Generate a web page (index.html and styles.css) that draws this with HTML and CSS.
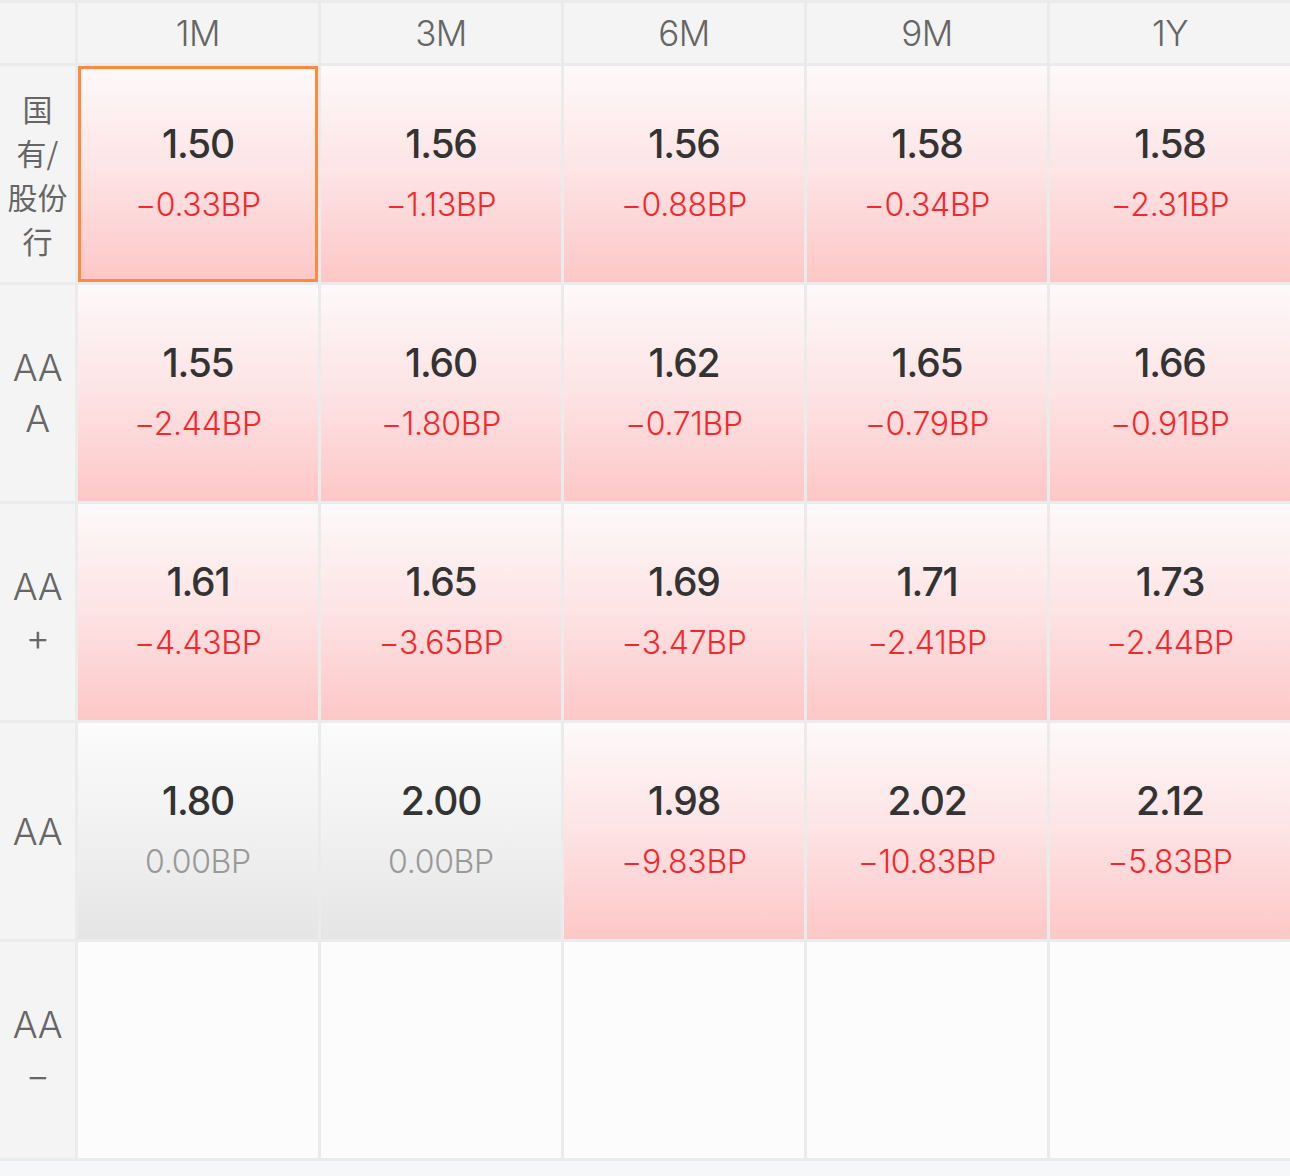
FILE: index.html
```html
<!DOCTYPE html>
<html lang="zh-CN">
<head>
<meta charset="utf-8">
<title>利率矩阵</title>
<link rel="stylesheet" href="styles.css">
</head>
<body>
<div class="matrix">
  <div class="corner"></div>
  <div class="head">1M</div>
  <div class="head">3M</div>
  <div class="head">6M</div>
  <div class="head">9M</div>
  <div class="head">1Y</div>

  <div class="label label-cn">国有/股份行</div>
  <div class="cell down selected"><span class="rate">1.50</span><span class="bp">−0.33BP</span></div>
  <div class="cell down"><span class="rate">1.56</span><span class="bp">−1.13BP</span></div>
  <div class="cell down"><span class="rate">1.56</span><span class="bp">−0.88BP</span></div>
  <div class="cell down"><span class="rate">1.58</span><span class="bp">−0.34BP</span></div>
  <div class="cell down"><span class="rate">1.58</span><span class="bp">−2.31BP</span></div>

  <div class="label label-en">AAA</div>
  <div class="cell down"><span class="rate">1.55</span><span class="bp">−2.44BP</span></div>
  <div class="cell down"><span class="rate">1.60</span><span class="bp">−1.80BP</span></div>
  <div class="cell down"><span class="rate">1.62</span><span class="bp">−0.71BP</span></div>
  <div class="cell down"><span class="rate">1.65</span><span class="bp">−0.79BP</span></div>
  <div class="cell down"><span class="rate">1.66</span><span class="bp">−0.91BP</span></div>

  <div class="label label-en">AA+</div>
  <div class="cell down"><span class="rate">1.61</span><span class="bp">−4.43BP</span></div>
  <div class="cell down"><span class="rate">1.65</span><span class="bp">−3.65BP</span></div>
  <div class="cell down"><span class="rate">1.69</span><span class="bp">−3.47BP</span></div>
  <div class="cell down"><span class="rate">1.71</span><span class="bp">−2.41BP</span></div>
  <div class="cell down"><span class="rate">1.73</span><span class="bp">−2.44BP</span></div>

  <div class="label label-en">AA</div>
  <div class="cell flat"><span class="rate">1.80</span><span class="bp">0.00BP</span></div>
  <div class="cell flat"><span class="rate">2.00</span><span class="bp">0.00BP</span></div>
  <div class="cell down"><span class="rate">1.98</span><span class="bp">−9.83BP</span></div>
  <div class="cell down"><span class="rate">2.02</span><span class="bp">−10.83BP</span></div>
  <div class="cell down"><span class="rate">2.12</span><span class="bp">−5.83BP</span></div>

  <div class="label label-en">AA−</div>
  <div class="cell empty"></div>
  <div class="cell empty"></div>
  <div class="cell empty"></div>
  <div class="cell empty"></div>
  <div class="cell empty"></div>
</div>
</body>
</html>
```

FILE: styles.css
```css
html, body {
  margin: 0;
  padding: 0;
}

body {
  background: #f6f7f9;
  font-family: Inter, "Noto Sans CJK SC", sans-serif;
}

.matrix {
  display: grid;
  grid-template-columns: 75px repeat(5, 240px);
  grid-template-rows: 60px repeat(5, 216px);
  gap: 3px;
  padding: 3px 0;
  background: #ebebeb;
}

.corner,
.head,
.label {
  background: #f4f4f4;
}

.head {
  display: flex;
  align-items: center;
  justify-content: center;
  font-size: 35px;
  font-weight: 300;
  color: #666;
  letter-spacing: -0.5px;
}

.label {
  display: flex;
  align-items: center;
  justify-content: center;
  text-align: center;
  color: #666;
  padding: 0 6px;
  overflow-wrap: anywhere;
}

.label-cn {
  font-family: "Noto Sans CJK SC", sans-serif;
  font-size: 30px;
  line-height: 44px;
}

.label-en {
  font-size: 37px;
  font-weight: 300;
  line-height: 51px;
  letter-spacing: -0.5px;
}

.cell {
  display: flex;
  flex-direction: column;
  align-items: center;
  justify-content: center;
  gap: 11px;
  box-sizing: border-box;
}

.down {
  background: linear-gradient(to bottom, #fdf9fa 0%, #fde3e4 50%, #fdc7c7 100%);
}

.flat {
  background: linear-gradient(to bottom, #fbfbfb 0%, #f1f1f1 50%, #e5e5e5 100%);
}

.empty {
  background: #fcfcfc;
}

.selected {
  box-shadow: inset 0 0 0 3px #ff8a3d;
}

.rate {
  font-size: 39px;
  font-weight: 500;
  line-height: 50px;
  color: #333;
  letter-spacing: -1.2px;
}

.bp {
  font-size: 32px;
  font-weight: 300;
  line-height: 50px;
  color: #f7262a;
  letter-spacing: -0.3px;
}

.flat .bp {
  color: #999;
}
```
